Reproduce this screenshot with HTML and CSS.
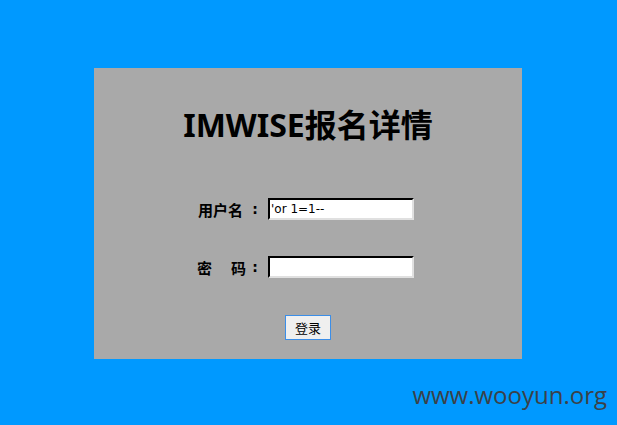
FILE: index.html
```html
<!DOCTYPE html>
<html>
<head>
<meta charset="utf-8">
<link rel="stylesheet" href="styles.css">
</head>
<body>
<div class="panel">
  <h1 class="title">IMWISE报名详情</h1>
  <div class="row">
    <label class="label"><span class="label-text">用户名</span><span class="colon">:</span></label>
    <input class="field" type="text" value="'or 1=1--">
  </div>
  <div class="row row-pass">
    <label class="label"><span class="label-text spaced">密　码</span><span class="colon">:</span></label>
    <input class="field" type="password" value="">
  </div>
  <div class="actions">
    <button class="btn">登录</button>
  </div>
</div>
<div class="watermark">www.wooyun.org</div>
</body>
</html>
```
FILE: styles.css
```css
html, body {
  margin: 0;
  padding: 0;
}
body {
  background: #0099ff;
  width: 617px;
  height: 425px;
  overflow: hidden;
  position: relative;
  font-family: "Noto Sans CJK SC", "Noto Sans", sans-serif;
}
.panel {
  margin: 68px 0 0 94px;
  width: 428px;
  height: 291px;
  box-sizing: border-box;
  padding-top: 37px;
  background: #a9a9a9;
}
.title {
  margin: 0;
  height: 40px;
  line-height: 40px;
  font-family: "Noto Sans", "Noto Sans CJK SC", sans-serif;
  font-size: 32px;
  font-weight: bold;
  text-align: center;
  color: #000;
}
.row {
  display: flex;
  align-items: center;
  padding-left: 100px;
  height: 22px;
  margin-top: 53px;
}
.row-pass { margin-top: 36px; }
.label {
  display: flex;
  align-items: center;
  width: 68px;
  margin-right: 6px;
  font-size: 15px;
  font-weight: bold;
  color: #000;
  white-space: nowrap;
}
.label-text {
  flex: 1;
  text-align: right;
  padding-right: 5px;
}
.label-text.spaced {
  letter-spacing: 2px;
  padding-right: 0;
}
.colon {
  width: 14px;
  text-align: center;
  font-family: "DejaVu Sans", sans-serif;
  font-size: 14px;
}
.field {
  box-sizing: border-box;
  width: 146px;
  height: 22px;
  margin: 0;
  padding: 0 1px;
  border: 2px inset #e0e0e0;
  border-top-color: #000;
  border-left-color: #000;
  background: #fff;
  font-family: "DejaVu Sans", sans-serif;
  font-size: 12px;
  color: #000;
}
.actions {
  margin-top: 37px;
  display: flex;
  justify-content: center;
}
.btn {
  width: 46px;
  height: 25px;
  padding: 0;
  margin: 0;
  border: 1px solid #3b8ee8;
  background: #efefef;
  font-family: "Noto Sans CJK SC", sans-serif;
  font-size: 13px;
  color: #000;
}
.watermark {
  position: absolute;
  right: 10px;
  top: 383px;
  line-height: 24px;
  font-family: "Open Sans", sans-serif;
  font-size: 24px;
  color: #3b4148;
}
```
